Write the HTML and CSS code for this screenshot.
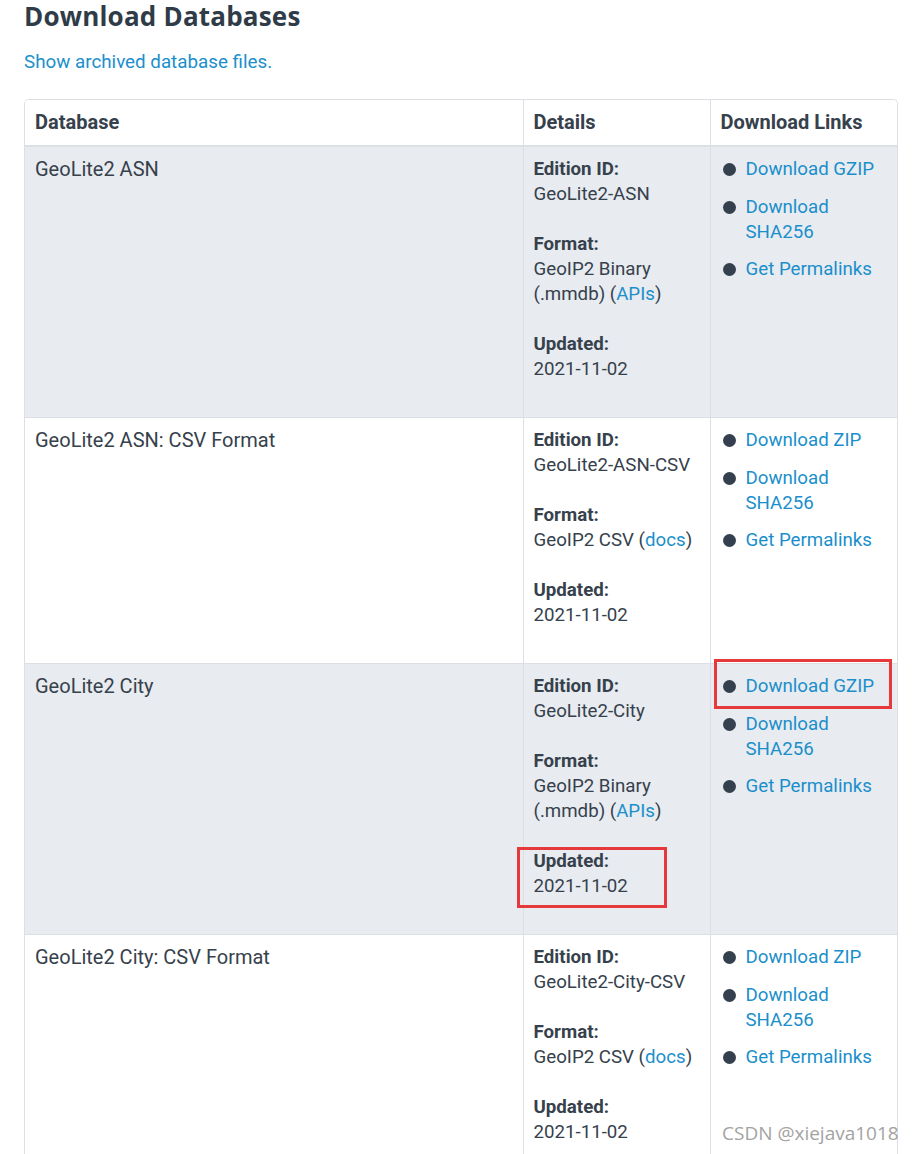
FILE: index.html
```html
<!DOCTYPE html>
<html>
<head>
<meta charset="utf-8">
<link rel="stylesheet" href="styles.css">
</head>
<body>
<div class="page">
  <h1 class="title">Download Databases</h1>
  <p class="archived"><a href="#">Show archived database files.</a></p>
  <div class="table-wrap">
    <table class="db-table">
      <colgroup>
        <col class="c1"><col class="c2"><col class="c3">
      </colgroup>
      <thead>
        <tr><th>Database</th><th>Details</th><th>Download Links</th></tr>
      </thead>
      <tbody>
        <tr class="odd">
          <td class="name">GeoLite2 ASN</td>
          <td>
            <p><b>Edition ID:</b><br>GeoLite2-ASN</p>
            <p><b>Format:</b><br>GeoIP2 Binary<br>(.mmdb) (<a href="#">APIs</a>)</p>
            <p><b>Updated:</b><br>2021-11-02</p>
          </td>
          <td>
            <ul class="links">
              <li><a href="#">Download GZIP</a></li>
              <li><a href="#">Download SHA256</a></li>
              <li><a href="#">Get Permalinks</a></li>
            </ul>
          </td>
        </tr>
        <tr>
          <td class="name">GeoLite2 ASN: CSV Format</td>
          <td>
            <p><b>Edition ID:</b><br>GeoLite2-ASN-CSV</p>
            <p><b>Format:</b><br>GeoIP2 CSV (<a href="#">docs</a>)</p>
            <p><b>Updated:</b><br>2021-11-02</p>
          </td>
          <td>
            <ul class="links">
              <li><a href="#">Download ZIP</a></li>
              <li><a href="#">Download SHA256</a></li>
              <li><a href="#">Get Permalinks</a></li>
            </ul>
          </td>
        </tr>
        <tr class="odd">
          <td class="name">GeoLite2 City</td>
          <td>
            <p><b>Edition ID:</b><br>GeoLite2-City</p>
            <p><b>Format:</b><br>GeoIP2 Binary<br>(.mmdb) (<a href="#">APIs</a>)</p>
            <p><b>Updated:</b><br>2021-11-02</p>
          </td>
          <td>
            <ul class="links">
              <li><a href="#">Download GZIP</a></li>
              <li><a href="#">Download SHA256</a></li>
              <li><a href="#">Get Permalinks</a></li>
            </ul>
          </td>
        </tr>
        <tr>
          <td class="name">GeoLite2 City: CSV Format</td>
          <td>
            <p><b>Edition ID:</b><br>GeoLite2-City-CSV</p>
            <p><b>Format:</b><br>GeoIP2 CSV (<a href="#">docs</a>)</p>
            <p><b>Updated:</b><br>2021-11-02</p>
          </td>
          <td>
            <ul class="links">
              <li><a href="#">Download ZIP</a></li>
              <li><a href="#">Download SHA256</a></li>
              <li><a href="#">Get Permalinks</a></li>
            </ul>
          </td>
        </tr>
      </tbody>
    </table>
  </div>
  <div class="mark mark-gzip"></div>
  <div class="mark mark-updated"></div>
  <div class="watermark">CSDN @xiejava1018</div>
</div>
</body>
</html>
```
FILE: styles.css
```css
html, body {
  margin: 0;
  padding: 0;
  background: #fff;
}
body {
  font-family: Roboto, "Liberation Sans", sans-serif;
  font-size: 18.7px;
  line-height: 25px;
  color: #36414c;
  overflow: hidden;
  height: 1154px;
}
.page {
  position: relative;
  padding: 0 16px 0 24px;
}
a {
  color: #1b8fcb;
  text-decoration: none;
}
.title {
  margin: 0 0 18px;
  font-family: "Open Sans", "DejaVu Sans", sans-serif;
  font-weight: 700;
  font-size: 26px;
  line-height: 32px;
  color: #2f3c48;
  letter-spacing: 0.2px;
}
.archived {
  margin: 0 0 24px;
  font-size: 18.8px;
}
.table-wrap {
  border: 1px solid #dcdfe3;
  border-bottom: none;
  border-radius: 5px 5px 0 0;
  overflow: hidden;
}
.db-table {
  width: 100%;
  border-collapse: collapse;
  table-layout: fixed;
}
.c1 { width: 498px; }
.c2 { width: 187px; }
.c3 { width: auto; }
.db-table th,
.db-table td {
  text-align: left;
  vertical-align: top;
  padding: 10px 10px;
  border-left: 1px solid #dcdfe3;
}
.db-table th:first-child,
.db-table td:first-child {
  border-left: none;
}
.db-table th {
  font-size: 20px;
  font-weight: 700;
  background: #fff;
  border-bottom: 2px solid #dcdfe3;
}
.db-table td.name {
  font-size: 20px;
}
.db-table tbody tr + tr td {
  border-top: 1px solid #dcdfe3;
}
.db-table tr.odd td {
  background: #e8ebf0;
}
.db-table td p {
  margin: 0 0 25px;
}
.db-table b {
  font-weight: 700;
}
.links {
  list-style: none;
  margin: 0;
  padding: 0 0 0 25px;
}
.links li {
  position: relative;
  margin-bottom: 12.5px;
}
.links li::before {
  content: "";
  position: absolute;
  left: -23px;
  top: 6px;
  width: 13px;
  height: 13px;
  border-radius: 50%;
  background: #34404d;
}
.mark {
  position: absolute;
  border: 3px solid #e5393b;
  box-sizing: border-box;
}
.mark-gzip {
  left: 714px;
  top: 659px;
  width: 178px;
  height: 50px;
}
.mark-updated {
  left: 517px;
  top: 847px;
  width: 150px;
  height: 61px;
}
.watermark {
  position: absolute;
  left: 722px;
  top: 1120px;
  font-family: "Open Sans", "DejaVu Sans", sans-serif;
  font-size: 19px;
  line-height: 26px;
  color: #a3a3a3;
  white-space: nowrap;
}
```
